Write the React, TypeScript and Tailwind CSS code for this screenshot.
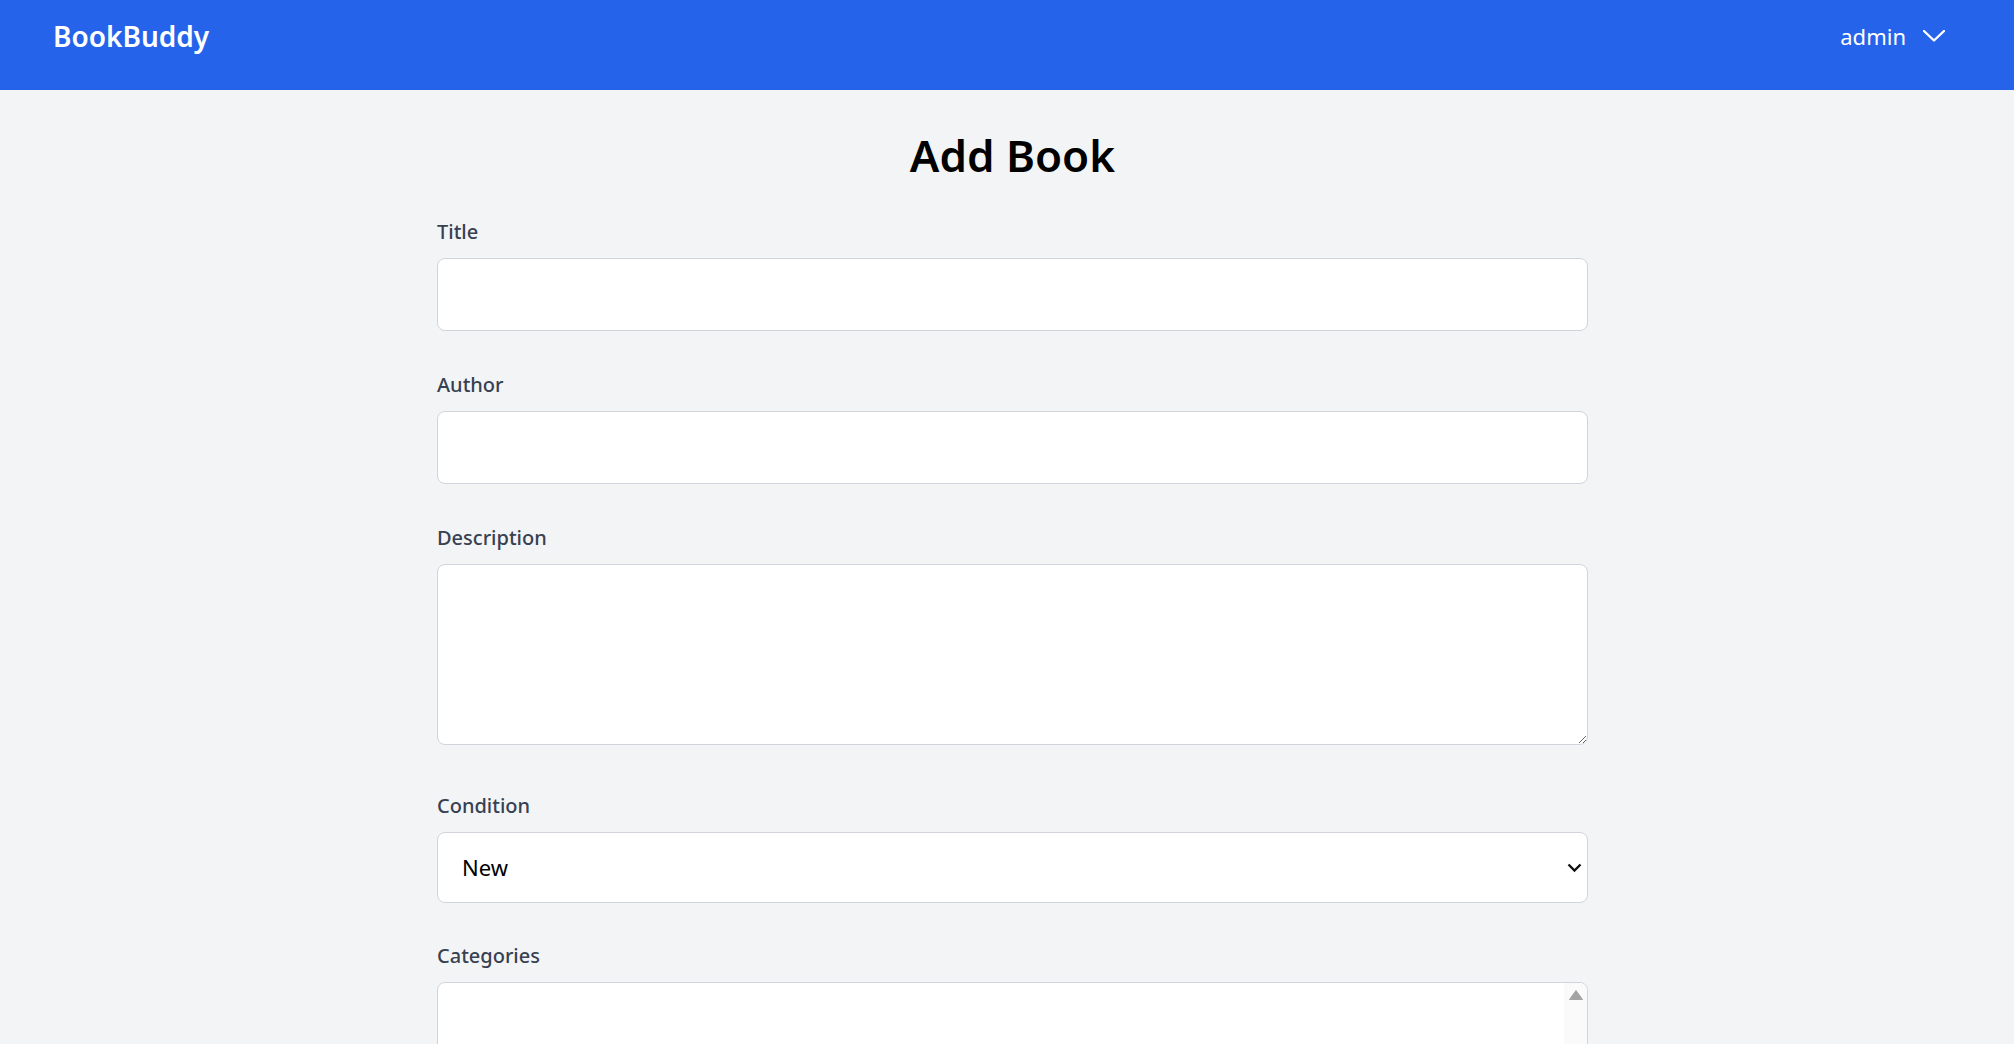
import { useState } from "react";

const conditions = ["New", "Like New", "Good", "Fair", "Poor"];

function Label({ children, htmlFor }: { children: string; htmlFor: string }) {
  return (
    <label htmlFor={htmlFor} className="block text-[20px] leading-[28px] font-medium text-[#374151] mb-[12px]">
      {children}
    </label>
  );
}

export default function App() {
  const [title, setTitle] = useState("");
  const [author, setAuthor] = useState("");
  const [description, setDescription] = useState("");
  const [condition, setCondition] = useState("New");

  return (
    <div className="min-h-screen bg-[#f3f4f6]" style={{ fontFamily: '"Noto Sans", "Open Sans", sans-serif' }}>
      <header className="h-[90px] bg-[#2563eb] flex items-center justify-between pl-[53px] pr-[69px] pb-[18px]">
        <span className="text-[28px] leading-[36px] font-semibold text-white">BookBuddy</span>
        <button className="flex items-center gap-[17px] text-white text-[22px] leading-[28px]">
          admin
          <svg width="22" height="12" viewBox="0 0 22 12" fill="none">
            <polyline points="1,1 11,10.5 21,1" stroke="white" strokeWidth="2.4" strokeLinecap="round" strokeLinejoin="round" />
          </svg>
        </button>
      </header>

      <main className="pl-[11px]">
        <div className="w-[1151px] mx-auto">
          <h1 className="mt-[39px] mb-[37px] text-center text-[44px] leading-[52px] font-semibold text-black">Add Book</h1>

          <form onSubmit={(e) => e.preventDefault()}>
            <div className="mb-[40px]">
              <Label htmlFor="title">Title</Label>
              <input
                id="title"
                value={title}
                onChange={(e) => setTitle(e.target.value)}
                className="block w-full h-[73px] px-[16px] text-[22px] bg-white border border-[#d1d5db] rounded-lg outline-none"
              />
            </div>

            <div className="mb-[40px]">
              <Label htmlFor="author">Author</Label>
              <input
                id="author"
                value={author}
                onChange={(e) => setAuthor(e.target.value)}
                className="block w-full h-[73px] px-[16px] text-[22px] bg-white border border-[#d1d5db] rounded-lg outline-none"
              />
            </div>

            <div className="mb-[47px]">
              <Label htmlFor="description">Description</Label>
              <textarea
                id="description"
                value={description}
                onChange={(e) => setDescription(e.target.value)}
                className="block w-full h-[181px] px-[16px] py-[12px] text-[22px] bg-white border border-[#d1d5db] rounded-lg outline-none"
              />
            </div>

            <div className="mb-[39px]">
              <Label htmlFor="condition">Condition</Label>
              <div className="relative">
                <select
                  id="condition"
                  value={condition}
                  onChange={(e) => setCondition(e.target.value)}
                  className="block w-full h-[71px] pl-[24px] pr-[40px] text-[22px] text-black bg-white border border-[#d1d5db] rounded-lg outline-none appearance-none"
                >
                  {conditions.map((c) => (
                    <option key={c} value={c}>
                      {c}
                    </option>
                  ))}
                </select>
                <svg
                  className="absolute right-[6px] top-1/2 -translate-y-1/2 pointer-events-none"
                  width="15"
                  height="10"
                  viewBox="0 0 15 10"
                  fill="none"
                >
                  <polyline points="1.5,1.5 7.5,7.5 13.5,1.5" stroke="#111" strokeWidth="2.4" />
                </svg>
              </div>
            </div>

            <div className="mb-[40px]">
              <Label htmlFor="categories">Categories</Label>
              <div id="categories" className="flex h-[160px] bg-white border border-[#d1d5db] rounded-lg overflow-hidden">
                <div className="flex-1" />
                <div className="w-[23px] bg-[#fafafa] flex justify-center pt-[7px]">
                  <svg width="14" height="10" viewBox="0 0 14 10">
                    <path d="M7 0.5 L13.5 9.5 L0.5 9.5 Z" fill="#a3a3a3" strokeLinejoin="round" stroke="#a3a3a3" strokeWidth="1" />
                  </svg>
                </div>
              </div>
            </div>
          </form>
        </div>
      </main>
    </div>
  );
}
